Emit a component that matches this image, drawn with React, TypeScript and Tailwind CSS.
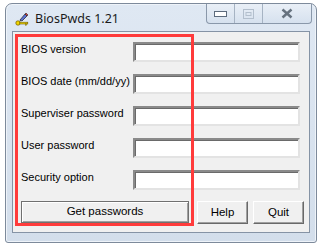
import React from 'react';

const fields = [
  'BIOS version',
  'BIOS date (mm/dd/yy)',
  'Superviser password',
  'User password',
  'Security option',
];

function AppIcon() {
  return (
    <svg width="14" height="14" viewBox="0 0 14 14">
      {/* pen */}
      <path d="M5 8 L10 2 L12 4 L7 9 Z" fill="#5a6fd0" stroke="#222" strokeWidth="0.7" />
      <path d="M10 2 L11 1 L13 3 L12 4 Z" fill="#e04040" stroke="#222" strokeWidth="0.6" />
      <path d="M5 8 L4.5 9.5 L6 9 Z" fill="#222" />
      {/* key */}
      <circle cx="3" cy="11" r="2.2" fill="#f2d600" stroke="#6b5a00" strokeWidth="0.7" />
      <rect x="4.8" y="10.2" width="8" height="1.8" fill="#f2d600" stroke="#6b5a00" strokeWidth="0.6" />
      <rect x="10.5" y="11.8" width="1.2" height="1.4" fill="#f2d600" stroke="#6b5a00" strokeWidth="0.5" />
    </svg>
  );
}

function CaptionButtons() {
  return (
    <div className="flex h-[20px] self-start border border-t-0 border-[#8a98aa] rounded-b-[4px] overflow-hidden bg-gradient-to-b from-[#e9eff7] to-[#d6e1ee]">
      <div className="flex w-[28px] items-center justify-center border-r border-[#a6b3c3]">
        <svg width="13" height="6" viewBox="0 0 13 6">
          <rect x="0.5" y="0.5" width="12" height="5" fill="#ffffff" stroke="#5d6b7d" />
        </svg>
      </div>
      <div className="flex w-[28px] items-center justify-center border-r border-[#a6b3c3]">
        <svg width="11" height="10" viewBox="0 0 11 10">
          <rect x="0.5" y="0.5" width="10" height="9" fill="none" stroke="#b3bfcd" />
          <rect x="3" y="3.5" width="5" height="3" fill="none" stroke="#b3bfcd" />
        </svg>
      </div>
      <div className="flex w-[48px] items-center justify-center">
        <svg width="12" height="11" viewBox="0 0 12 11" fill="none">
          <path d="M1.5 1.5 L10.5 9.5" stroke="#66727f" strokeWidth="2.4" />
          <path d="M10.5 1.5 L1.5 9.5" stroke="#66727f" strokeWidth="2.4" />
        </svg>
      </div>
    </div>
  );
}

export default function App() {
  return (
    <div className="w-[324px] h-[248px] bg-white pl-[5px] pt-[3px]" style={{ fontFamily: '"Liberation Sans", Arial, sans-serif' }}>
      <div className="flex flex-col w-[312px] h-[240px] border border-[#7d8a9b] rounded-t-[7px] rounded-b-[3px] bg-gradient-to-b from-[#dfe8f3] to-[#d3deeb] shadow-[inset_0_0_0_1px_#eef3f9]">
        {/* title bar */}
        <div className="flex h-[27px] items-start pl-[9px] pr-[4px]">
          <div className="flex items-center gap-[6px] pt-[6px]">
            <AppIcon />
            <span className="text-[12.5px] text-[#1a1a1a]" style={{ fontFamily: '"Noto Sans", "Open Sans", sans-serif' }}>
              BiosPwds 1.21
            </span>
          </div>
          <div className="flex-1" />
          <CaptionButtons />
        </div>

        {/* client area */}
        <div className="relative mx-[6px] h-[202px] border border-[#8593a5] bg-[#f0f0f0]">
          <div className="flex flex-col gap-[12px] pl-[8px] pr-[9px] pt-[10px]">
            {fields.map((label) => (
              <div key={label} className="flex h-[20px] items-start">
                <span className="w-[112px] shrink-0 whitespace-nowrap -mt-[1px] text-[11px] leading-[16px] text-black">{label}</span>
                <div className="w-[168px] h-[20px] bg-white border-2 border-t-[#8a8a8a] border-l-[#8a8a8a] border-b-[#e3e3e3] border-r-[#e3e3e3] shadow-[inset_1px_1px_0_#6a6a6a]" />
              </div>
            ))}
          </div>

          <div className="flex pl-[8px] pt-[11px]">
            <button className="w-[168px] h-[22px] border border-[#707070] bg-[#f0f0f0] shadow-[inset_1px_1px_0_#ffffff,inset_-1px_-1px_0_#a0a0a0] text-[11.5px] text-black">
              Get passwords
            </button>
            <button className="ml-[8px] w-[51px] h-[23px] border border-t-[#ffffff] border-l-[#ffffff] border-b-[#696969] border-r-[#696969] bg-[#f0f0f0] shadow-[inset_-1px_-1px_0_#a0a0a0] text-[11.5px] text-black">
              Help
            </button>
            <button className="ml-[5px] w-[51px] h-[23px] border border-t-[#ffffff] border-l-[#ffffff] border-b-[#696969] border-r-[#696969] bg-[#f0f0f0] shadow-[inset_-1px_-1px_0_#a0a0a0] text-[11.5px] text-black">
              Quit
            </button>
          </div>

          {/* highlight annotation */}
          <div className="pointer-events-none absolute left-[2px] top-[2px] w-[179px] h-[192px] border-[3px] border-[#ff3b3b]" />
        </div>
      </div>
    </div>
  );
}
